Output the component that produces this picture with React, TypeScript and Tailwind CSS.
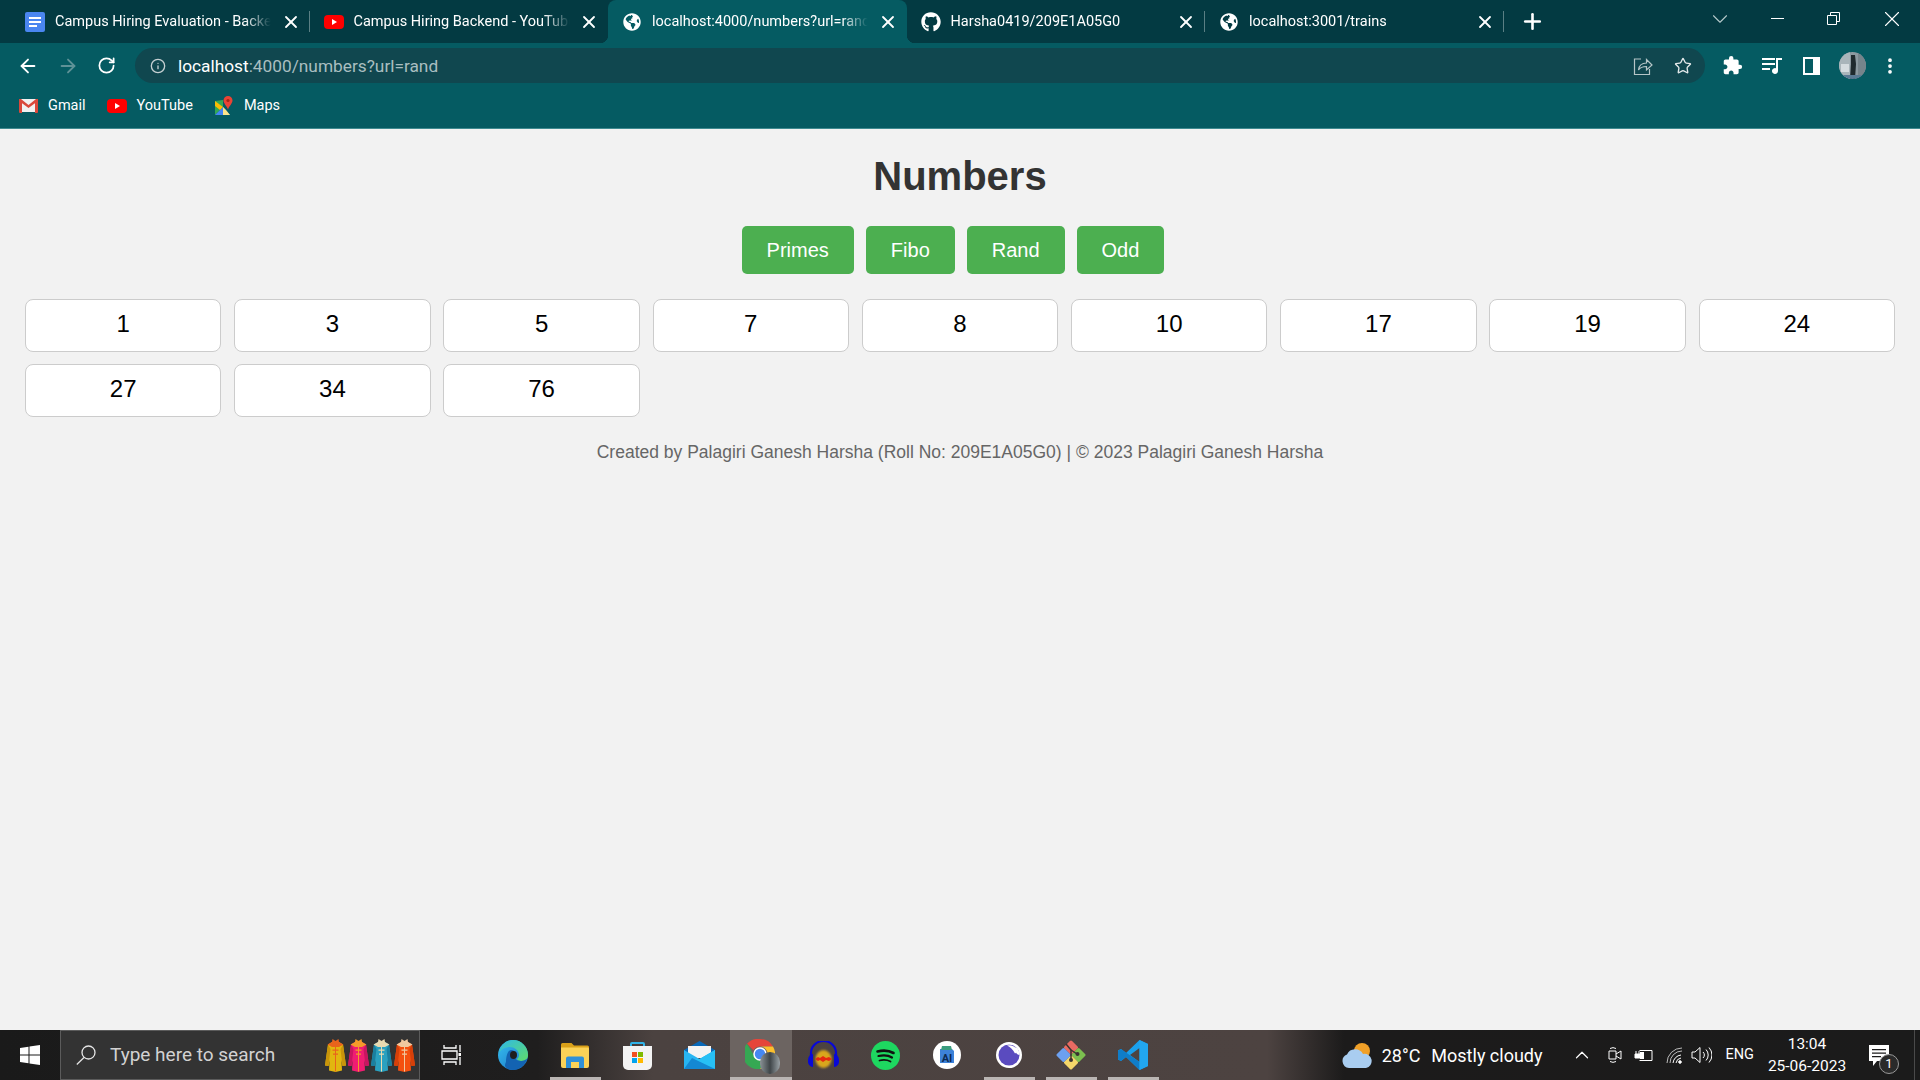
import type { ReactNode } from "react";
import { ArrowLeft, ArrowRight, ChevronDown, ChevronUp, Info, MoreVertical, Plus, RotateCw, Star, X } from "lucide-react";
import { FaGithub, FaGlobeAmericas } from "react-icons/fa";
import { MdExtension } from "react-icons/md";

const numbers = [1, 3, 5, 7, 8, 10, 17, 19, 24, 27, 34, 76];
const links = ["Primes", "Fibo", "Rand", "Odd"];

function DocsIcon() {
  return (
    <svg width="20" height="20" viewBox="0 0 20 20">
      <rect width="20" height="20" rx="2" fill="#4a86f0" />
      <path d="M4 5h12v2H4zM4 9h12v2H4zM4 13h8v2H4z" fill="#fff" />
    </svg>
  );
}

function YoutubeIcon() {
  return (
    <svg width="20" height="14" viewBox="0 0 20 14">
      <rect width="20" height="14" rx="4" fill="#f00" />
      <path d="M8 4l5 3-5 3z" fill="#fff" />
    </svg>
  );
}

function GmailIcon() {
  return (
    <svg width="19" height="15" viewBox="0 0 19 15">
      <path d="M1 1h17v13H1z" fill="#f1f1f1" />
      <path d="M2 1l7.500 6L17 1l2 0v2l-9.500 7L0 3V1z" fill="#d9483b" />
      <path d="M0 2l3 2v11H1a1 1 0 0 1-1-1zM19 2l-3 2v11h2a1 1 0 0 0 1-1z" fill="#d9483b" />
    </svg>
  );
}

function MapsIcon() {
  return (
    <svg width="18" height="20" viewBox="0 0 18 20">
      <path d="M0 5l8-1v7L0 19z" fill="#34a853" />
      <path d="M0 19l8-8 7 8z" fill="#4285f4" />
      <path d="M0 5l8 6-3 3-5-4z" fill="#fbbc04" />
      <path d="M8 11l3 3 4 5H8z" fill="#fbe58a" />
      <path d="M13 0a4.500 4.500 0 0 1 4.500 4.500c0 3-3 5-4.500 9-1.500-4-4.500-6-4.500-9A4.500 4.500 0 0 1 13 0z" fill="#ea4335" />
      <circle cx="13" cy="4.500" r="1.600" fill="#a52714" />
    </svg>
  );
}

function Tab({ icon, title, active, divider }: { icon: ReactNode; title: string; active?: boolean; divider?: boolean }) {
  return (
    <div
      className={`relative flex h-[43px] w-[298.5px] shrink-0 items-center pl-[14px] ${
        active ? "rounded-t-lg bg-[#055b62]" : ""
      }`}
    >
      {active && (
        <>
          <span className="absolute bottom-0 left-[-8px] h-2 w-2 bg-[radial-gradient(circle_at_0_0,#033a42_8px,#055b62_8.500px)]" />
          <span className="absolute bottom-0 right-[-8px] h-2 w-2 bg-[radial-gradient(circle_at_100%_0,#033a42_8px,#055b62_8.500px)]" />
        </>
      )}
      <span className="flex w-5 shrink-0 items-center justify-center">{icon}</span>
      <span className="ml-[10px] w-[218px] overflow-hidden whitespace-nowrap text-[14.500px] leading-5 text-white [mask-image:linear-gradient(to_right,black_87%,transparent_99%)]">
        {title}
      </span>
      <X className="ml-[7.500px] h-5 w-5 text-white" strokeWidth={2.200} />
      {divider && <span className="absolute right-0 top-[11px] h-[21px] w-px bg-[#5a7f84]" />}
    </div>
  );
}

function TabStrip() {
  return (
    <div className="flex h-[43px] items-center bg-[#033a42] pl-[11px]">
      <Tab icon={<DocsIcon />} title="Campus Hiring Evaluation - Backend" divider />
      <Tab icon={<YoutubeIcon />} title="Campus Hiring Backend - YouTube" />
      <Tab icon={<FaGlobeAmericas className="h-[18px] w-[18px] text-white" />} title="localhost:4000/numbers?url=rand" active />
      <Tab icon={<FaGithub className="h-5 w-5 text-white" />} title="Harsha0419/209E1A05G0" divider />
      <Tab icon={<FaGlobeAmericas className="h-[18px] w-[18px] text-white" />} title="localhost:3001/trains" divider />
      <Plus className="ml-[16px] h-[25px] w-[25px] shrink-0 text-white" strokeWidth={2.500} />
      <ChevronDown className="ml-[162.500px] h-[26px] w-[26px] shrink-0 -translate-y-[3px] text-[#b5c8ca]" strokeWidth={1} />
      <span className="ml-[37.500px] h-px w-[13px] shrink-0 -translate-y-[3px] bg-white" />
      <svg className="ml-[43px] shrink-0 -translate-y-[3px]" width="13" height="13" viewBox="0 0 13 13" fill="none" stroke="#fff">
        <path d="M.5 3.500h9v9h-9zM3.500 3.500v-3h9v9h-3" />
      </svg>
      <X className="ml-[39px] h-[26px] w-[26px] shrink-0 -translate-y-[3px] text-white" strokeWidth={1} />
    </div>
  );
}

function ToolBar() {
  return (
    <div className="box-content flex h-[35px] items-center bg-[#055b62] pl-[17px] pt-[5px]">
      <ArrowLeft className="h-[22px] w-[22px] text-white" strokeWidth={2} />
      <ArrowRight className="ml-[18px] h-[22px] w-[22px] text-[#5f9297]" strokeWidth={2} />
      <RotateCw className="ml-[18px] h-[19px] w-[19px] text-white" strokeWidth={2.200} />
      <div className="ml-[19px] flex h-[35px] w-[1570px] items-center rounded-full bg-[#10474f] pl-[15px]">
        <Info className="h-[16px] w-[16px] text-[#c5d0d2]" strokeWidth={2} />
        <span className="ml-[12px] text-[17.300px] leading-6 text-[#a9bec0]">
          <span className="text-white">localhost</span>:4000/numbers?url=rand
        </span>
        <svg className="ml-auto" width="20" height="20" viewBox="0 0 20 20" fill="none" stroke="#b5c5c7" strokeWidth="1.200">
          <path d="M8 3H1.500v15.500h15V13" />
          <path d="M5.500 14c.5-4.500 3.500-7 8-7V3.500l5.500 5.500-5.500 5v-3.500c-3.500 0-6 .5-8 3.500z" />
        </svg>
        <Star className="ml-[21px] mr-[13px] h-[18px] w-[18px] text-[#e3e9ea]" strokeWidth={1.800} />
      </div>
      <MdExtension className="ml-[17px] h-[21px] w-[21px] text-white" />
      <svg className="ml-[19px]" width="20" height="18" viewBox="0 0 20 18" fill="#fff">
        <path d="M0 1h13v2H0zM0 6h13v2H0zM0 11h8v2H0zM14 1h6v2h-4v11a3 3 0 1 1-2-2.800z" />
      </svg>
      <svg className="ml-[21px]" width="17" height="18" viewBox="0 0 17 18" fill="#fff">
        <path fillRule="evenodd" d="M0 0h17v18H0zM2 2v14h8V2z" />
      </svg>
      <svg className="ml-[19px]" width="27" height="27" viewBox="0 0 27 27">
        <defs>
          <clipPath id="avatarClip">
            <circle cx="13.500" cy="13.500" r="13.500" />
          </clipPath>
        </defs>
        <g clipPath="url(#avatarClip)">
          <rect width="27" height="27" fill="#8b99a0" />
          <rect width="11" height="27" fill="#a9b5ba" />
          <rect x="19" width="8" height="27" fill="#76848b" />
          <path d="M2 12h8v8H2z" fill="#d5dcdf" />
          <path d="M12 3h4l1 9-1 15h-5l1-15z" fill="#1f2a2e" />
          <path d="M0 23h27v4H0z" fill="#5a7a94" />
        </g>
      </svg>
      <MoreVertical className="ml-[14px] h-[20px] w-[20px] text-white" strokeWidth={2.500} />
    </div>
  );
}

function BookmarkBar() {
  return (
    <div className="box-content flex h-[45px] items-center border-b border-[#3f8a90] bg-[#055b62] pl-[19px] text-[14.500px] text-white">
      <GmailIcon />
      <span className="ml-[10px]">Gmail</span>
      <span className="ml-[21px]"><YoutubeIcon /></span>
      <span className="ml-[10px]">YouTube</span>
      <span className="ml-[22px]"><MapsIcon /></span>
      <span className="ml-[11px]">Maps</span>
    </div>
  );
}

function Coat({ main, dark, trim }: { main: string; dark: string; trim: string }) {
  return (
    <svg width="21" height="33" viewBox="0 0 21 33">
      <path d="M7 3l3.500 2L14 3l4 2.500 3 21-3.500.5-1-6L17 31.500 10.500 33 4 31.500l.5-10.500-1 6L0 26.500l3-21z" fill={main} />
      <path d="M3 5.500L0 26.500 3.500 27l2-17zM18 5.500l3 21-3.500.5-2-17z" fill={dark} />
      <path d="M2.500 5.500L7 3l.5-3 3 2 3-2 .5 3 4.500 2.500L14 8H7z" fill={trim} />
      <path d="M10 7h1v25.500h-1z" fill={trim} />
      <path d="M7.500 10.500h6v1.200h-6zM8 14.500h5v1.200H8z" fill={trim} />
    </svg>
  );
}

function TaskIcon({ children, open, active }: { children: ReactNode; open?: boolean; active?: boolean }) {
  return (
    <div className={`relative flex h-full w-[62px] shrink-0 items-center justify-center ${active ? "bg-[#6c6461]" : ""}`}>
      {children}
      {open && <span className={`absolute bottom-0 h-[3px] bg-[#bab5b3] ${active ? "left-0 right-0" : "left-[5.500px] right-[5.500px]"}`} />}
    </div>
  );
}

function TaskBar() {
  return (
    <div className="flex h-[50px] items-center bg-[linear-gradient(90deg,#1a1a1a_0%,#1f1e1e_28%,#4b4240_34%,#4d4341_66%,#1c1b1b_70%,#1b1b1b_100%)] text-white">
      <div className="flex h-full w-[60px] items-center justify-center">
        <svg width="20" height="20" viewBox="0 0 20 20" fill="#fff">
          <path d="M0 3l8.500-1.200v7.700H0zM9.500 1.600L20 0v9.500H9.500zM0 10.500h8.500v7.700L0 17zM9.500 10.500H20V20L9.500 18.400z" />
        </svg>
      </div>
      <div className="flex h-full w-[360px] items-center border border-[#5b5b5b] bg-[#333333] pl-[15px] pr-[4px]">
        <svg width="20" height="20" viewBox="0 0 20 20" fill="none" stroke="#e5e5e5" strokeWidth="1.300">
          <circle cx="12.500" cy="7.500" r="6.500" />
          <path d="M8 12.500L.8 19.500" />
        </svg>
        <span className="ml-[14px] text-[19px] text-[#d2d2d2]">Type here to search</span>
        <div className="ml-auto flex gap-[2px]">
          <Coat main="#e2b60f" dark="#c8940a" trim="#e8641c" />
          <Coat main="#ef1d72" dark="#c91560" trim="#f49a2a" />
          <Coat main="#2aa0bf" dark="#1a7f9f" trim="#e8d9b0" />
          <Coat main="#f4500f" dark="#d63f08" trim="#f0c9a0" />
        </div>
      </div>
      <TaskIcon>
        <svg width="20" height="20" viewBox="0 0 20 20" fill="none" stroke="#fff" strokeWidth="1.300">
          <path d="M3 0v3h12V0M1 6h15v8H1zM3 20v-3h12v3M19 0v7M19 12v8" />
          <rect x="17.500" y="8" width="3" height="3" fill="#fff" stroke="none" />
        </svg>
      </TaskIcon>
      <TaskIcon>
        <svg width="30" height="30" viewBox="0 0 30 30">
          <defs>
            <linearGradient id="edgeA" x1="0" y1="0" x2="1" y2="1">
              <stop offset="0" stopColor="#35c1f1" />
              <stop offset="1" stopColor="#1b6fc2" />
            </linearGradient>
            <linearGradient id="edgeB" x1="0" y1="0" x2="1" y2="1">
              <stop offset="0" stopColor="#2fb9e8" />
              <stop offset="1" stopColor="#5fdc6a" />
            </linearGradient>
          </defs>
          <circle cx="15" cy="15" r="15" fill="url(#edgeA)" />
          <path d="M15 0a15 15 0 0 1 15 15c0 4-3 6-7 6-2 0-4-1-4-2 1-1 2-2 2-4 0-5-5-8-9-8S3 9 1 13C3 5 8 0 15 0z" fill="url(#edgeB)" />
          <path d="M13 10c4 0 5 3 4 6-1 2 1 5 6 5 2 0 4-1 6-2-2 6-7 11-14 11-3 0-7-1-8-4 0-1 0-2 1-4 0-6 2-12 5-12z" fill="#1363b2" />
          <ellipse cx="15.500" cy="15" rx="3.500" ry="4" fill="#1f1e1e" />
        </svg>
      </TaskIcon>
      <TaskIcon open>
        <svg width="28" height="25" viewBox="0 0 28 25">
          <path d="M0 1.500A1.500 1.500 0 0 1 1.500 0h9L13 2.500h13.500A1.500 1.500 0 0 1 28 4v3H0z" fill="#d9a019" />
          <path d="M0 4.500h27a1 1 0 0 1 1 1V23a2 2 0 0 1-2 2H2a2 2 0 0 1-2-2z" fill="#fbd257" />
          <path d="M5 25v-9.500a2 2 0 0 1 2-2h14a2 2 0 0 1 2 2V25h-5v-6h-8v6z" fill="#2f90d8" />
        </svg>
      </TaskIcon>
      <TaskIcon>
        <svg width="29" height="29" viewBox="0 0 29 29">
          <path d="M7 7V3a2 2 0 0 1 2-2h11a2 2 0 0 1 2 2v4h-2V3H9v4z" fill="#30b3e8" />
          <path d="M0 5h29v19a5 5 0 0 1-5 5H5a5 5 0 0 1-5-5z" fill="#f3f3f3" />
          <path d="M9 11h5v5H9z" fill="#f25022" />
          <path d="M15 11h5v5h-5z" fill="#7fba00" />
          <path d="M9 17h5v5H9z" fill="#00a4ef" />
          <path d="M15 17h5v5h-5z" fill="#ffb900" />
        </svg>
      </TaskIcon>
      <TaskIcon>
        <svg width="31" height="28" viewBox="0 0 31 28">
          <path d="M15.500 0L31 9v6H0V9z" fill="#0868b8" />
          <path d="M4 5h23v12H4z" fill="#f3f3f3" />
          <path d="M0 9l15.500 9L31 9v19H0z" fill="#27b5f2" />
          <path d="M8 18l23 10V9l-15.500 9z" fill="#27c0f5" />
          <path d="M8 17l23 11H0z" fill="#1488d2" />
        </svg>
      </TaskIcon>
      <TaskIcon open active>
        <div className="relative h-8 w-8">
          <svg width="30" height="30" viewBox="0 0 30 30">
            <path d="M15 0a15 15 0 0 1 13 7.500H15a7.500 7.500 0 0 0-6.500 3.700L2 4.800A15 15 0 0 1 15 0z" fill="#e5453a" />
            <path d="M28 7.500A15 15 0 0 1 15 30l6.500-11.200A7.500 7.500 0 0 0 15 7.500z" fill="#fbc02d" />
            <path d="M2 4.800l6.500 11A7.500 7.500 0 0 0 21.500 18.800L15 30A15 15 0 0 1 2 4.800z" fill="#35a853" />
            <circle cx="15" cy="15" r="6" fill="#4688f1" stroke="#fff" strokeWidth="1.500" />
          </svg>
          <span className="absolute bottom-[-3px] right-[-3px] h-[22px] w-[20px] rounded-full bg-[linear-gradient(90deg,#8a9296,#3f4548_50%,#9aa2a6)]" />
        </div>
      </TaskIcon>
      <TaskIcon>
        <svg width="31" height="29" viewBox="0 0 31 29">
          <defs>
            <filter id="audBlur">
              <feGaussianBlur stdDeviation="1" />
            </filter>
          </defs>
          <path d="M3 18v-6a12.500 12 0 0 1 25 0v6" fill="none" stroke="#0808d8" strokeWidth="2.200" />
          <path d="M0 19a5 6 0 0 1 5-6v13a5 6 0 0 1-5-7zM31 19a5 6 0 0 0-5-6v13a5 6 0 0 0 5-7z" fill="#0808d8" />
          <ellipse cx="15.500" cy="18" rx="8" ry="9" fill="#d9a71e" filter="url(#audBlur)" />
          <path d="M7 18l3-2 2 1 3-2 3 2 3-1 3 2-3 2-3-1-3 2-3-2-2 1z" fill="#e52a10" />
        </svg>
      </TaskIcon>
      <TaskIcon>
        <svg width="29" height="29" viewBox="0 0 29 29">
          <circle cx="14.500" cy="14.500" r="14.500" fill="#1ed760" />
          <g fill="none" stroke="#111" strokeLinecap="round">
            <path d="M6.500 10.500c6-1.500 11.500-1 16 1.500" strokeWidth="2.600" />
            <path d="M7.500 15c5-1.200 10-.7 13.500 1.500" strokeWidth="2.200" />
            <path d="M8.500 19.500c4-1 8-.6 11 1" strokeWidth="1.800" />
          </g>
        </svg>
      </TaskIcon>
      <TaskIcon>
        <svg width="28" height="28" viewBox="0 0 28 28">
          <circle cx="14" cy="14" r="14" fill="#fff" />
          <path d="M7 8h12l2 2v12H7z" fill="#3d82d8" />
          <path d="M9 5h9l1 4H8z" fill="#3b9d7f" />
          <text x="14" y="20.500" textAnchor="middle" fontSize="11" fontWeight="700" fill="#0c2a52" fontFamily="Roboto, sans-serif">AI</text>
        </svg>
      </TaskIcon>
      <TaskIcon open>
        <svg width="26" height="26" viewBox="0 0 26 26">
          <circle cx="13" cy="13" r="13" fill="#fff" />
          <circle cx="13" cy="13" r="10.500" fill="#5a4bbf" />
          <path d="M9 3a10.500 10.500 0 0 1 14.500 10c-1.500-.2-3-1-3.500-2.500a7 7 0 0 0-11-7.500z" fill="#fff" />
          <path d="M11 3.500a10 10 0 0 1 11 5 5 5 0 0 1-3 3C17 7.500 14 5 11 3.500z" fill="#fff" />
        </svg>
      </TaskIcon>
      <TaskIcon open>
        <svg width="30" height="30" viewBox="0 0 30 30" strokeLinejoin="round">
          <path d="M15 13L9.500 7.500 15 2l5.500 5.500z" fill="#ea6a62" stroke="#ea6a62" strokeWidth="3" />
          <path d="M17 15l5.500-5.500L28 15l-5.500 5.500z" fill="#7cc04f" stroke="#7cc04f" strokeWidth="3" />
          <path d="M15 17l5.500 5.500L15 28l-5.500-5.500z" fill="#f5d76a" stroke="#f5d76a" strokeWidth="3" />
          <path d="M13 15l-5.500 5.500L2 15l5.500-5.500z" fill="#6ca0f0" stroke="#6ca0f0" strokeWidth="3" />
          <path d="M10 4l5 6v10" stroke="#3a3331" strokeWidth="1.500" fill="none" />
          <path d="M15 10l6 4" stroke="#3a3331" strokeWidth="1.500" />
          <circle cx="21.500" cy="14" r="2" fill="#3a3331" />
          <circle cx="15" cy="20" r="2" fill="#3a3331" />
        </svg>
      </TaskIcon>
      <TaskIcon open>
        <svg width="30" height="30" viewBox="0 0 30 30">
          <path d="M21.500 0L30 4v22l-8.500 4L8 17l-5 4-3-1.500v-9L3 9l5 4z" fill="#1aa0ec" />
          <path d="M21.500 8L12 15l9.500 7z" fill="#4d4341" />
          <path d="M0 10.500L3 9l18.500 13v8L8 17l-5 4-3-1.500z" fill="#0f7dc9" />
          <path d="M21.500 0L30 4v22l-8.500 4z" fill="#22a7f0" />
        </svg>
      </TaskIcon>
      <div className="ml-auto flex h-full items-center pr-[5px]">
        <svg width="31" height="26" viewBox="0 0 31 26">
          <circle cx="21" cy="9" r="8" fill="#f0a028" />
          <path d="M8 26a7 7 0 0 1-2-13.500A9 9 0 0 1 22 12a7 7 0 0 1 3 14z" fill="#a9cdf0" />
        </svg>
        <span className="ml-[10px] whitespace-nowrap text-[18px]">28°C</span>
        <span className="ml-[11px] whitespace-nowrap text-[18px]">Mostly cloudy</span>
        <ChevronUp className="ml-[28px] h-[22px] w-[22px] text-white" strokeWidth={1.300} />
        <svg className="ml-[14px]" width="15" height="20" viewBox="0 0 15 20" fill="none" stroke="#fff">
          <path d="M2 6h7v8H2zM9 9l5-3v8l-5-3M3 3.500a6 6 0 0 1 6 0M3 16.500a6 6 0 0 0 6 0" />
        </svg>
        <svg className="ml-[12px]" width="19" height="13" viewBox="0 0 19 13" fill="none" stroke="#fff">
          <path d="M5.500 1.500H18v10H5.500" />
          <path d="M1 5h5v4H1zM2 2v3M5 2v3" fill="#fff" />
          <path d="M6 3h4v7H6z" fill="#fff" stroke="none" />
        </svg>
        <svg className="ml-[13px]" width="17" height="17" viewBox="0 0 17 17" fill="none" stroke="#fff">
          <path d="M1 16A15 15 0 0 1 16 1M4 16A12 12 0 0 1 16 4" strokeOpacity=".7" />
          <path d="M7 16a9 9 0 0 1 8-8M10 16a6 6 0 0 1 5-5" />
          <circle cx="14" cy="15" r="1.300" fill="#fff" />
        </svg>
        <svg className="ml-[8px]" width="21" height="18" viewBox="0 0 21 18" fill="none" stroke="#fff">
          <path d="M1 6h3l5-4.500v15L4 12H1zM12 6a4 4 0 0 1 0 6M15 3.500a8 8 0 0 1 0 11M18 1.500a11 11 0 0 1 0 15" />
        </svg>
        <span className="ml-[14px] text-[14.500px]">ENG</span>
        <div className="ml-[14px] flex w-[78px] flex-col items-center whitespace-nowrap text-[15.500px] leading-[22px]">
          <span>13:04</span>
          <span>25-06-2023</span>
        </div>
        <div className="relative ml-[23px] h-[21px] w-[20px]">
          <svg width="20" height="21" viewBox="0 0 20 21">
            <path fillRule="evenodd" d="M0 0h20v16H8l-4 5v-5H0zM3 4v1.200h14V4zM3 7.500v1.200h14V7.500zM3 11v1.200h9V11z" fill="#fff" />
          </svg>
          <span className="absolute left-[10px] top-[9px] flex h-[20px] w-[20px] items-center justify-center rounded-full border border-[#999] bg-[#2a2a2a] text-[13px] leading-none">
            1
          </span>
        </div>
        <span className="ml-[25px] h-full w-px bg-[#4a4a4a]" />
      </div>
    </div>
  );
}

export default function App() {
  return (
    <div className="flex h-screen w-full flex-col overflow-hidden bg-[#f2f2f2]" style={{ fontFamily: "Roboto, sans-serif" }}>
      <TabStrip />
      <ToolBar />
      <BookmarkBar />
      <main className="flex-1 px-[25px]" style={{ fontFamily: '"Liberation Sans", Arial, sans-serif' }}>
        <h1 className="mt-[24px] text-center text-[40px] font-bold leading-[46px] text-[#333333]">Numbers</h1>
        <div className="mt-[27px] flex justify-center gap-3 pr-[14px]">
          {links.map((link) => (
            <button
              key={link}
              type="button"
              className="h-12 rounded-[5px] bg-[#4caf50] px-[25px] pb-[1px] text-[20px] text-white"
            >
              {link}
            </button>
          ))}
        </div>
        <div className="mt-[25px] grid grid-cols-9 gap-x-[12.800px] gap-y-[12px]">
          {numbers.map((n) => (
            <div
              key={n}
              className="flex h-[53px] items-center justify-center rounded-lg border border-[#cccccc] bg-white pb-[3px] text-[24px] text-black"
            >
              {n}
            </div>
          ))}
        </div>
        <p className="mt-[25px] text-center text-[17.500px] leading-[21px] text-[#666666]">
          Created by Palagiri Ganesh Harsha (Roll No: 209E1A05G0) | © 2023 Palagiri Ganesh Harsha
        </p>
      </main>
      <TaskBar />
    </div>
  );
}
